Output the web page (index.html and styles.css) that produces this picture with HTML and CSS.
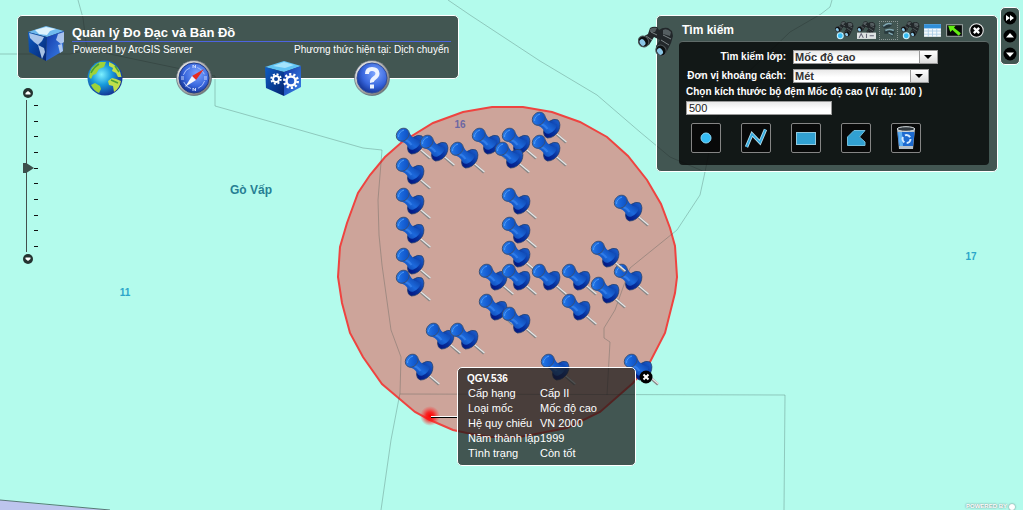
FILE: index.html
```html
<!DOCTYPE html>
<html lang="vi">
<head>
<meta charset="utf-8">
<title>Quản lý Đo Đạc và Bản Đồ</title>
<link rel="stylesheet" href="styles.css">
</head>
<body>
<main class="viewer">
  <svg class="map" viewBox="0 0 1023 510" preserveAspectRatio="xMinYMin slice" role="img" aria-label="Bản đồ">
    <defs>
      <linearGradient id="pinHead" x1="0" y1="0" x2="1" y2="1"><stop offset="0" stop-color="#2f86f0"/><stop offset=".5" stop-color="#1763d8"/><stop offset="1" stop-color="#0a48b8"/></linearGradient>
      <linearGradient id="pinShank" x1="0" y1="1" x2="1" y2="0"><stop offset="0" stop-color="#06379c"/><stop offset=".45" stop-color="#1c69dc"/><stop offset="1" stop-color="#052f90"/></linearGradient>
      <linearGradient id="pinBase" x1="0" y1="1" x2="1" y2="0"><stop offset="0" stop-color="#020f7c"/><stop offset=".45" stop-color="#06309c"/><stop offset="1" stop-color="#1e66d4"/></linearGradient>
      <radialGradient id="glow"><stop offset="0" stop-color="#f00"/><stop offset=".4" stop-color="#f11" stop-opacity=".85"/><stop offset="1" stop-color="#f33" stop-opacity="0"/></radialGradient>
      <g id="pin">
        <path d="M25 22.500 34 30.500" stroke="#858585" stroke-width="2.600"/>
        <path d="M25 22 34.500 30" stroke="#e4e4e4" stroke-width="1.400"/>
        <path d="M26 8Q29.500 12 26.500 19Q22 26 15.500 26Q11.500 25 11.500 20Q12 14 17 9.500Q22 6 26 8Z" fill="url(#pinBase)" stroke="#23406f" stroke-width=".8"/>
        <path d="M4 13Q9.500 14.500 11.500 18Q13 22.500 17.500 21.500Q23.500 19 25 12.500Q21.500 12 18.500 10.500Q15 8.500 13 4Z" fill="url(#pinShank)"/>
        <path d="M8 11.500Q13 13 15.500 17" fill="none" stroke="#3a86ee" stroke-width="2" stroke-opacity=".7"/>
        <ellipse cx="6.700" cy="6.700" rx="7" ry="5.900" transform="rotate(-48 6.700 6.700)" fill="url(#pinHead)" stroke="#3a5074" stroke-width=".9"/>
        <path d="M2.500 9Q2.500 4 8 2" fill="none" stroke="#4e9bf5" stroke-width="1"/>
      </g>
    </defs>
    <rect width="1023" height="510" class="land"/>
    <path d="M0 500 48 505 110 510H0Z" class="district"/>
    <path class="buffer" d="M492 107H523L552 112 580 122 607 137 628 156 647 180 661 204 670 228 675 246 677 277 675 293 665 333 650 362 633 383 600 412 567 428 520 437H490L467 433 453 430 430 420 415 412 382 384 363 357 350 333 342 303 338 277 340 247 347 223 358 193 370 175 385 157 402 142 433 123 463 112Z"/>
    <g class="borders">
      <path d="M78 0 83 18 87 50 100 52 215 76V106L240 113 363 148 382 150 378 200 379 235 382 265 391 330 401 357 400 393 391 440 381 510"/>
      <path d="M0 54H70L87 50M400 394 785 395 784 510"/>
      <path d="M448 0 470 15 540 61 597 95 640 132 670 157 705 172 700 195 677 230 630 268 615 310 604 328V338L610 342 607 395"/>
      <path d="M832 0 830 7 821 14 790 32 740 80 715 122 705 172"/>
      <path d="M0 500 110 510" class="strong"/>
    </g>
    <g class="names">
      <text x="460" y="128" class="name-violet">16</text>
      <text x="251" y="194" class="name-town">Gò Vấp</text>
      <text x="125" y="296">11</text>
      <text x="971" y="260">17</text>
    </g>
    <g>
      <use href="#pin" x="532" y="112"/><use href="#pin" x="396" y="128"/><use href="#pin" x="472" y="128"/><use href="#pin" x="502" y="128"/>
      <use href="#pin" x="420" y="135"/><use href="#pin" x="532" y="135"/><use href="#pin" x="450" y="142"/><use href="#pin" x="495" y="142"/>
      <use href="#pin" x="396" y="158"/><use href="#pin" x="396" y="188"/><use href="#pin" x="502" y="188"/><use href="#pin" x="614" y="195"/>
      <use href="#pin" x="396" y="217"/><use href="#pin" x="502" y="217"/><use href="#pin" x="502" y="241"/>
      <use href="#pin" x="396" y="248"/><use href="#pin" x="396" y="270"/><use href="#pin" x="479" y="264"/><use href="#pin" x="502" y="264"/>
      <use href="#pin" x="532" y="264"/><use href="#pin" x="562" y="264"/><use href="#pin" x="614" y="264"/><use href="#pin" x="591" y="241"/><use href="#pin" x="591" y="277"/>
      <use href="#pin" x="479" y="294"/><use href="#pin" x="562" y="294"/><use href="#pin" x="502" y="307"/><use href="#pin" x="426" y="323"/>
      <use href="#pin" x="450" y="323"/><use href="#pin" x="405" y="354"/><use href="#pin" x="541" y="354"/><use href="#pin" x="624" y="354"/>
    </g>
    <circle cx="430" cy="416" r="10" fill="url(#glow)"/>
    <path d="M431 416.500H458" stroke="#fff"/><path d="M431 417.500H458" stroke="#000"/>
  </svg>

  <header class="panel banner">
    <div class="banner-top">
      <svg class="logo" viewBox="0 0 36 36" aria-hidden="true">
        <defs><linearGradient id="cubeL" x1="0" y1="0" x2="1" y2="1"><stop offset="0" stop-color="#0e5dc4"/><stop offset="1" stop-color="#05236f"/></linearGradient>
        <linearGradient id="cubeR" x1="0" y1="0" x2="1" y2="1"><stop offset="0" stop-color="#1237a8"/><stop offset="1" stop-color="#3b84e8"/></linearGradient></defs>
        <path d="M0 7 18 1 36 6 19 12Z" fill="#6fb9ee"/><path d="M0 7 19 12 18 36 1 27Z" fill="url(#cubeL)"/><path d="M19 12 36 6 35 26 18 36Z" fill="url(#cubeR)"/>
        <path d="M7 5 18 2 28 4 22 6 19 10 11 9Z" fill="#f1fbff" opacity=".85"/>
        <path d="M1 8 16 12 14 16 10 20 6 17 2 13ZM10 20 16 23 17 27 14 34 12 27Z" fill="#cfe3fa" opacity=".8"/>
        <path d="M30 9 36 7V17L33 19 28 15ZM30 20 34 19 35 26 32 28Z" fill="#d4e4fa" opacity=".75"/>
      </svg>
      <div class="heading">
        <h1>Quản lý Đo Đạc và Bản Đồ</h1>
        <div class="subline"><span>Powered by ArcGIS Server</span><span>Phương thức hiện tại: Dịch chuyển</span></div>
      </div>
    </div>
    <nav class="dock" aria-label="Công cụ">
      <button type="button" aria-label="Bản đồ"><svg viewBox="0 0 36 36">
        <defs><radialGradient id="sea" cx=".4" cy=".4" r=".65"><stop offset="0" stop-color="#7df0ff"/><stop offset=".45" stop-color="#189bdc"/><stop offset="1" stop-color="#142b8d"/></radialGradient></defs>
        <circle cx="18" cy="18" r="17.500" fill="url(#sea)"/>
        <path d="M2 17Q3 6 13 2L19 2 17 7 12 9 9 14 6 15 4 19ZM4 25 8 23 13 26 14 29 12 33Q7 31 4 25Z" fill="#9ed23a"/>
        <path d="M22 2Q33 6 34.500 17L31 17 29 13 25 11 26 8 22 6ZM21 21 25 18 29 19 34 21Q33 28 27 32L26 26 22 25Z" fill="#bfdf4b"/>
        <path d="M4 13Q7 7 12 4M28 6 32 12M24 20 31 23" stroke="#4ba235" stroke-width="1.500" fill="none"/>
      </svg></button>
      <button type="button" aria-label="Điều hướng"><svg viewBox="0 0 36 36">
        <defs><radialGradient id="dial" cx=".6" cy=".35" r=".7"><stop offset="0" stop-color="#7fa6ff"/><stop offset=".6" stop-color="#3866dd"/><stop offset="1" stop-color="#11308f"/></radialGradient>
        <linearGradient id="rim" x1="0" y1="0" x2="1" y2="1"><stop offset="0" stop-color="#f2f2f2"/><stop offset="1" stop-color="#666"/></linearGradient></defs>
        <circle cx="18" cy="18" r="17.500" fill="url(#rim)" stroke="#4b5865" stroke-width=".6"/><circle cx="18" cy="18" r="15" fill="url(#dial)" stroke="#223c88"/>
        <circle cx="18" cy="18" r="11" fill="none" stroke="#a9c0fa" stroke-width="1" stroke-dasharray="10 7.280" stroke-dashoffset="-3"/>
        <path d="M17 8V5L19.500 8V5M17 31V28L19.500 31V28M5 17H8M5 19H8M28 17H31M28 19H31" stroke="#c9d7fc" fill="none"/>
        <path d="M28 9 16 16 20 20Z" fill="#e62b20"/><path d="M9 27 16 16 20 20Z" fill="#f3f5fc"/>
      </svg></button>
      <button type="button" aria-label="Thiết lập"><svg viewBox="0 0 36 36">
        <path d="M0 7 19 1 36 6 19 12Z" fill="#62c4f4"/><path d="M8 6 19 2 29 5 20 8Z" fill="#a4e3fb"/><path d="M0 7 19 12V36L1 28Z" fill="url(#cubeL)"/><path d="M19 12 36 6V27L19 36Z" fill="url(#cubeR)"/>
        <g fill="none" stroke="#fff"><circle cx="11" cy="19" r="3" stroke-width="2"/><circle cx="11" cy="19" r="4.800" stroke-width="1.800" stroke-dasharray="2 1.770"/>
        <circle cx="26" cy="21" r="4.500" stroke-width="2.500"/><circle cx="26" cy="21" r="6.700" stroke-width="2.600" stroke-dasharray="2.200 2.010"/></g>
      </svg></button>
      <button type="button" aria-label="Trợ giúp"><svg viewBox="0 0 36 36">
        <circle cx="18" cy="18" r="17.500" fill="url(#rim)" stroke="#4b5865" stroke-width=".6"/><circle cx="18" cy="18" r="15" fill="url(#dial)" stroke="#324e9c"/>
        <path d="M13 14Q13 9 18 9T23.500 13.500Q23.500 16 20.500 18T18 22.500" fill="none" stroke="#eef3ff" stroke-width="4"/><rect x="16" y="24.500" width="4" height="4" fill="#eef3ff"/>
      </svg></button>
    </nav>
  </header>

  <div class="zoom">
    <button type="button" class="zoom-btn" aria-label="Phóng to"><svg viewBox="0 0 10 10"><circle cx="5" cy="5" r="5" fill="#243330"/><path d="M2.500 6.500V5L5 3 7.500 5V6.500Z" fill="#fff"/></svg></button>
    <div class="zoom-scale">
      <input type="range" min="0" max="9" value="4" aria-label="Mức phóng">
      <div class="ticks"><i></i><i></i><i></i><i></i><i></i><i></i><i></i><i></i><i></i><i></i></div>
    </div>
    <button type="button" class="zoom-btn" aria-label="Thu nhỏ"><svg viewBox="0 0 10 10"><circle cx="5" cy="5" r="5" fill="#243330"/><path d="M2.500 3.500V5L5 7 7.500 5V3.500Z" fill="#fff"/></svg></button>
  </div>

  <section class="panel search">
    <svg class="search-badge" viewBox="0 0 36 32" aria-hidden="true">
      <defs><g id="binoc">
        <path d="M12 2Q15 0 19 1L21 4Q25 1 30 2L34 5 35 10 33 17 28 27 19 28 18 20 22 14 16 11 11 19 4 21 0 16Q3 11 10 8Z" fill="#22272a"/>
        <path d="M12 3Q15 1 19 2L17 6 12 6ZM25 4Q29 2 33 6L32 10 25 8Z" fill="#555e61"/>
        <path d="M8 10 14 14M13 6 19 9M25 9 33 13M23 14 31 19" stroke="#7c8587" stroke-width="1"/>
        <ellipse cx="5.500" cy="15.500" rx="5" ry="5.600" transform="rotate(-35 5.500 15.500)" fill="#0d1011" stroke="#4d5558"/><ellipse cx="4.500" cy="16.500" rx="2.600" ry="3.500" transform="rotate(-35 4.500 16.500)" fill="#8bc6e6"/>
        <ellipse cx="23" cy="24.500" rx="5" ry="5.600" transform="rotate(-35 23 24.500)" fill="#0d1011" stroke="#4d5558"/><ellipse cx="22" cy="25.500" rx="2.600" ry="3.500" transform="rotate(-35 22 25.500)" fill="#8bc6e6"/>
      </g></defs>
      <use href="#binoc"/>
    </svg>
    <div class="search-head">
      <h2>Tìm kiếm</h2>
      <div class="head-tools">
        <button type="button" aria-label="Tìm theo đồ họa"><svg viewBox="0 0 18 18"><use href="#binoc" transform="scale(.5)"/><circle cx="5" cy="14" r="2.800" fill="#35bdf5" stroke="#c9f2ff"/></svg></button>
        <button type="button" aria-label="Tìm theo thuộc tính"><svg viewBox="0 0 18 18"><use href="#binoc" transform="scale(.5)"/><rect y="11" width="18" height="6" fill="#dfe3e3"/><path d="M2 16 4 12 6 16M9 12V16M12 14H16" stroke="#667" fill="none"/></svg></button>
        <button type="button" class="current" aria-label="Tìm vùng đệm"><svg viewBox="0 0 18 18"><path d="M3 5Q7 0 13 3L10 6 5 7ZM5 9Q10 6 15 9L13 15 9 12 5 12Z" fill="#27383c"/><path d="M4 5Q8 1 12 3M6 9Q10 7 14 9M9 11 13 13" stroke="#82a9b4" stroke-width="1.500" fill="none"/></svg></button>
        <button type="button" aria-label="Tìm lân cận"><svg viewBox="0 0 18 18"><use href="#binoc" transform="scale(.5)"/><circle cx="5" cy="14" r="2.800" fill="#35bdf5" stroke="#c9f2ff"/></svg></button>
        <button type="button" aria-label="Kết quả"><svg viewBox="0 0 18 18"><rect x="1" y="3" width="16" height="12" fill="#f4f9fd"/><rect x="1" y="3" width="16" height="4" fill="#318fd8"/><path d="M1 9.500H17M1 12.500H17M5 7V15M9 7V15M13 7V15" stroke="#a9cbe4" stroke-width=".8"/></svg></button>
        <button type="button" aria-label="Xóa chọn"><svg viewBox="0 0 18 18"><rect x="1.500" y="3.500" width="15" height="11" fill="#080b0b" stroke="#9aa3a2"/><path d="M3 4.500H10L8.500 6.500 15 11.500 13 14 7 8.500 5 10.500Z" fill="#63ee13"/></svg></button>
        <button type="button" aria-label="Đóng"><svg viewBox="0 0 18 18"><circle cx="9" cy="9" r="6.400" fill="#050505" stroke="#eee"/><path d="M6.500 6.500 11.500 11.500M11.500 6.500 6.500 11.500" stroke="#fff" stroke-width="2.200"/></svg></button>
      </div>
    </div>
    <form class="search-body">
      <div class="field">
        <label for="layer">Tìm kiếm lớp:</label>
        <span class="combo combo-wide"><select id="layer"><option>Mốc độ cao</option></select></span>
      </div>
      <div class="field">
        <label for="unit">Đơn vị khoảng cách:</label>
        <span class="combo"><select id="unit"><option>Mét</option></select></span>
      </div>
      <label class="size-label" for="size">Chọn kích thước bộ đệm Mốc độ cao (Ví dụ: 100 )</label>
      <input class="size" id="size" type="text" value="500">
      <div class="shapes">
        <button type="button" aria-label="Điểm"><svg viewBox="0 0 28 28"><circle cx="14" cy="14" r="5" fill="#35bdf5" stroke="#8ad9f8"/></svg></button>
        <button type="button" aria-label="Đường"><svg viewBox="0 0 28 28"><path d="M4.500 23 10 10 18 18.500 23.500 5.500" fill="none" stroke="#b5ddeb" stroke-width="3.400"/><path d="M4.500 23 10 10 18 18.500 23.500 5.500" fill="none" stroke="#31a9df" stroke-width="1.800"/></svg></button>
        <button type="button" aria-label="Hình chữ nhật"><svg viewBox="0 0 28 28"><rect x="4.500" y="8.500" width="19" height="12" fill="#31a0d1" stroke="#91c9df"/></svg></button>
        <button type="button" aria-label="Vùng"><svg viewBox="0 0 28 28"><path d="M12 6.500H23L17.500 13 23 18V21.500H5.500V13Z" fill="#31a0d1" stroke="#72bddb"/></svg></button>
        <button type="button" aria-label="Xóa"><svg viewBox="0 0 28 28"><path d="M5 4.500H23L21 25H7Z" fill="#b7c0c7"/><path d="M5.500 8H22.500L21 22H7Z" fill="#1c69cf"/><path d="M6 8H10L11 22H7.500Z" fill="#5fb0f2"/><ellipse cx="14" cy="5" rx="8.800" ry="2.300" fill="#30383d" stroke="#dce3e6"/><circle cx="14.500" cy="15" r="4" fill="none" stroke="#d5ebff" stroke-width="2" stroke-dasharray="5.900 2.470"/></svg></button>
      </div>
    </form>
  </section>

  <aside class="panel tray">
    <button type="button" aria-label="Thu gọn"><svg viewBox="0 0 14 14"><circle cx="7" cy="7" r="6.500"/><path d="M3 4 7 7 3 10ZM7 4 11 7 7 10Z" fill="#fff"/></svg></button>
    <button type="button" aria-label="Lên"><svg viewBox="0 0 14 14"><circle cx="7" cy="7" r="6.500"/><path d="M7 4 11 8.500H3Z" fill="#fff"/></svg></button>
    <button type="button" aria-label="Xuống"><svg viewBox="0 0 14 14"><circle cx="7" cy="7" r="6.500"/><path d="M7 10 11 5.500H3Z" fill="#fff"/></svg></button>
  </aside>

  <article class="panel popup">
    <h3>QGV.536</h3>
    <dl>
      <dt>Cấp hạng</dt><dd>Cấp II</dd>
      <dt>Loại mốc</dt><dd>Mốc độ cao</dd>
      <dt>Hệ quy chiếu</dt><dd>VN 2000</dd>
      <dt>Năm thành lập</dt><dd>1999</dd>
      <dt>Tình trạng</dt><dd>Còn tốt</dd>
    </dl>
    <button type="button" class="popup-close" aria-label="Đóng"><svg viewBox="0 0 14 14"><circle cx="7" cy="7" r="6.500"/><path d="M4.500 4.500 9.500 9.500M9.500 4.500 4.500 9.500" stroke="#fff" stroke-width="2"/></svg></button>
  </article>

  <div class="credit">POWERED BY <i></i></div>
</main>
</body>
</html>
```
FILE: styles.css
```css
* { box-sizing: border-box; }
body, h1, h2, h3, dl, dd { margin: 0; }
body { font: 11px/15px "Liberation Sans", Arial, sans-serif; color: #fff; }
button { display: block; padding: 0; border: 0; background: none; cursor: pointer; }
svg { display: block; }
button svg { width: 100%; height: 100%; }

.viewer { position: relative; height: 100vh; overflow: hidden; background: #b3fbec; }
.map { width: 100%; height: 100%; }
.land { fill: #b3fbec; }
.district { fill: #bdc5ee; }
.buffer { fill: rgba(214, 134, 126, .74); stroke: #ee4440; stroke-width: 2; }
.borders { fill: none; stroke: #304844; stroke-opacity: .28; stroke-width: 1; }
.borders .strong { stroke-opacity: .7; }
.names { font-weight: bold; font-size: 10px; text-anchor: middle; fill: #2ba6c9; }
.name-violet { fill: #6c67a3; }
.name-town { fill: #267f93; font-size: 12px; }

.panel { position: absolute; background: rgba(22, 22, 22, .72); border: 1px solid #fff; border-radius: 5px; }

.banner { left: 17px; top: 15px; width: 442px; max-width: 60%; padding: 9px 7px 0 10px; }
.banner-top { display: flex; gap: 8px; }
.logo { width: 36px; height: 36px; flex: none; }
.heading { flex: 1; white-space: nowrap; }
.heading h1 { font-size: 13px; line-height: 16px; border-bottom: 1px solid #4d64e0; }
.subline { display: flex; justify-content: space-between; padding: 0 2px 0 1px; font-size: 10px; line-height: 16px; }
.dock { display: flex; gap: 53px; margin: -1px 0 -18px 59px; }
.dock button { width: 36px; height: 36px; }

.zoom { position: absolute; left: 23px; top: 88px; }
.zoom-btn { width: 10px; height: 10px; }
.zoom-scale { display: flex; margin: 2px 0; }
.zoom-scale input { appearance: none; writing-mode: vertical-lr; width: 11px; height: 152px; margin: 0; background: linear-gradient(#41504d, #41504d) 3px 0 / 1px 100% no-repeat; }
.zoom-scale input::-webkit-slider-thumb { appearance: none; width: 11px; height: 10px; background: #3c504c; clip-path: polygon(0 0, 30% 0, 100% 50%, 30% 100%, 0 100%); }
.ticks { display: flex; flex-direction: column; justify-content: space-between; padding: 5px 0; }
.ticks i { width: 4px; height: 1px; background: #111; }

.search { right: 25px; top: 15px; width: 342px; padding: 3px 8px 6px 22px; }
.search-badge { position: absolute; left: -19px; top: 10px; width: 36px; height: 32px; }
.search-head { display: flex; align-items: center; justify-content: space-between; height: 22px; padding: 0 3px; }
.search-head h2 { font-size: 12px; line-height: 20px; }
.head-tools { display: flex; gap: 3px; }
.head-tools button { width: 19px; height: 19px; }
.head-tools .current { outline: 1px dotted #8b9695; outline-offset: -1px; }
.search-body { display: flex; flex-direction: column; align-items: flex-start; background: rgba(5, 6, 6, .78); border-top: 1px solid #5f6b69; border-radius: 4px; padding: 5px 7px 12px; font-weight: bold; }
.field { display: grid; grid-template-columns: 100px auto; gap: 7px; height: 19px; align-items: center; white-space: nowrap; }
.field label, .size-label { font-size: 10px; text-align: right; }
.size-label { line-height: 14px; }
.combo { position: relative; width: 136px; height: 14px; }
.combo-wide { width: 145px; }
.combo select { display: block; width: 100%; height: 14px; appearance: none; border: 1px solid #999; border-radius: 0; padding: 0 20px 0 1px; background: linear-gradient(#e9e9e9, #fff 60%); color: #333; font: bold 11px/12px "Liberation Sans", Arial, sans-serif; }
.combo::before { content: ""; position: absolute; right: 1px; top: 1px; bottom: 1px; width: 17px; border-left: 1px solid #999; background: linear-gradient(#fff, #ddd); pointer-events: none; }
.combo::after { content: ""; position: absolute; right: 6px; top: 5px; border: 4px solid transparent; border-top-color: #000; border-bottom: 0; pointer-events: none; }
.size { width: 146px; height: 14px; margin-top: 2px; border: 1px solid #999; padding: 0 2px; background: linear-gradient(#e9e9e9, #fff 60%); color: #222; font: 11px/12px "Liberation Sans", Arial, sans-serif; }
.shapes { display: flex; gap: 20px; padding: 8px 0 0 5px; }
.shapes button { width: 30px; height: 30px; border: 1px solid #858585; border-radius: 2px; background: #080909; }

.tray { right: 3px; top: 7px; padding: 3px 2px; display: grid; gap: 4px; }
.tray button { width: 14px; height: 14px; }

.popup { left: 457px; top: 367px; width: 179px; padding: 4px 10px; }
.popup h3 { font-size: 10px; line-height: 14px; margin-left: -1px; }
.popup dl { display: grid; grid-template-columns: 72px 1fr; font-size: 11px; line-height: 15px; white-space: nowrap; }
.popup-close { position: absolute; right: -18px; top: 2px; width: 14px; height: 14px; }

.credit { position: absolute; right: 8px; bottom: 0; display: flex; gap: 2px; align-items: center; font-size: 6px; font-weight: bold; line-height: 7px; text-shadow: 0 0 2px #566; }
.credit i { width: 6px; height: 6px; border-radius: 50%; background: #fff; box-shadow: 0 0 2px #566; }
```
